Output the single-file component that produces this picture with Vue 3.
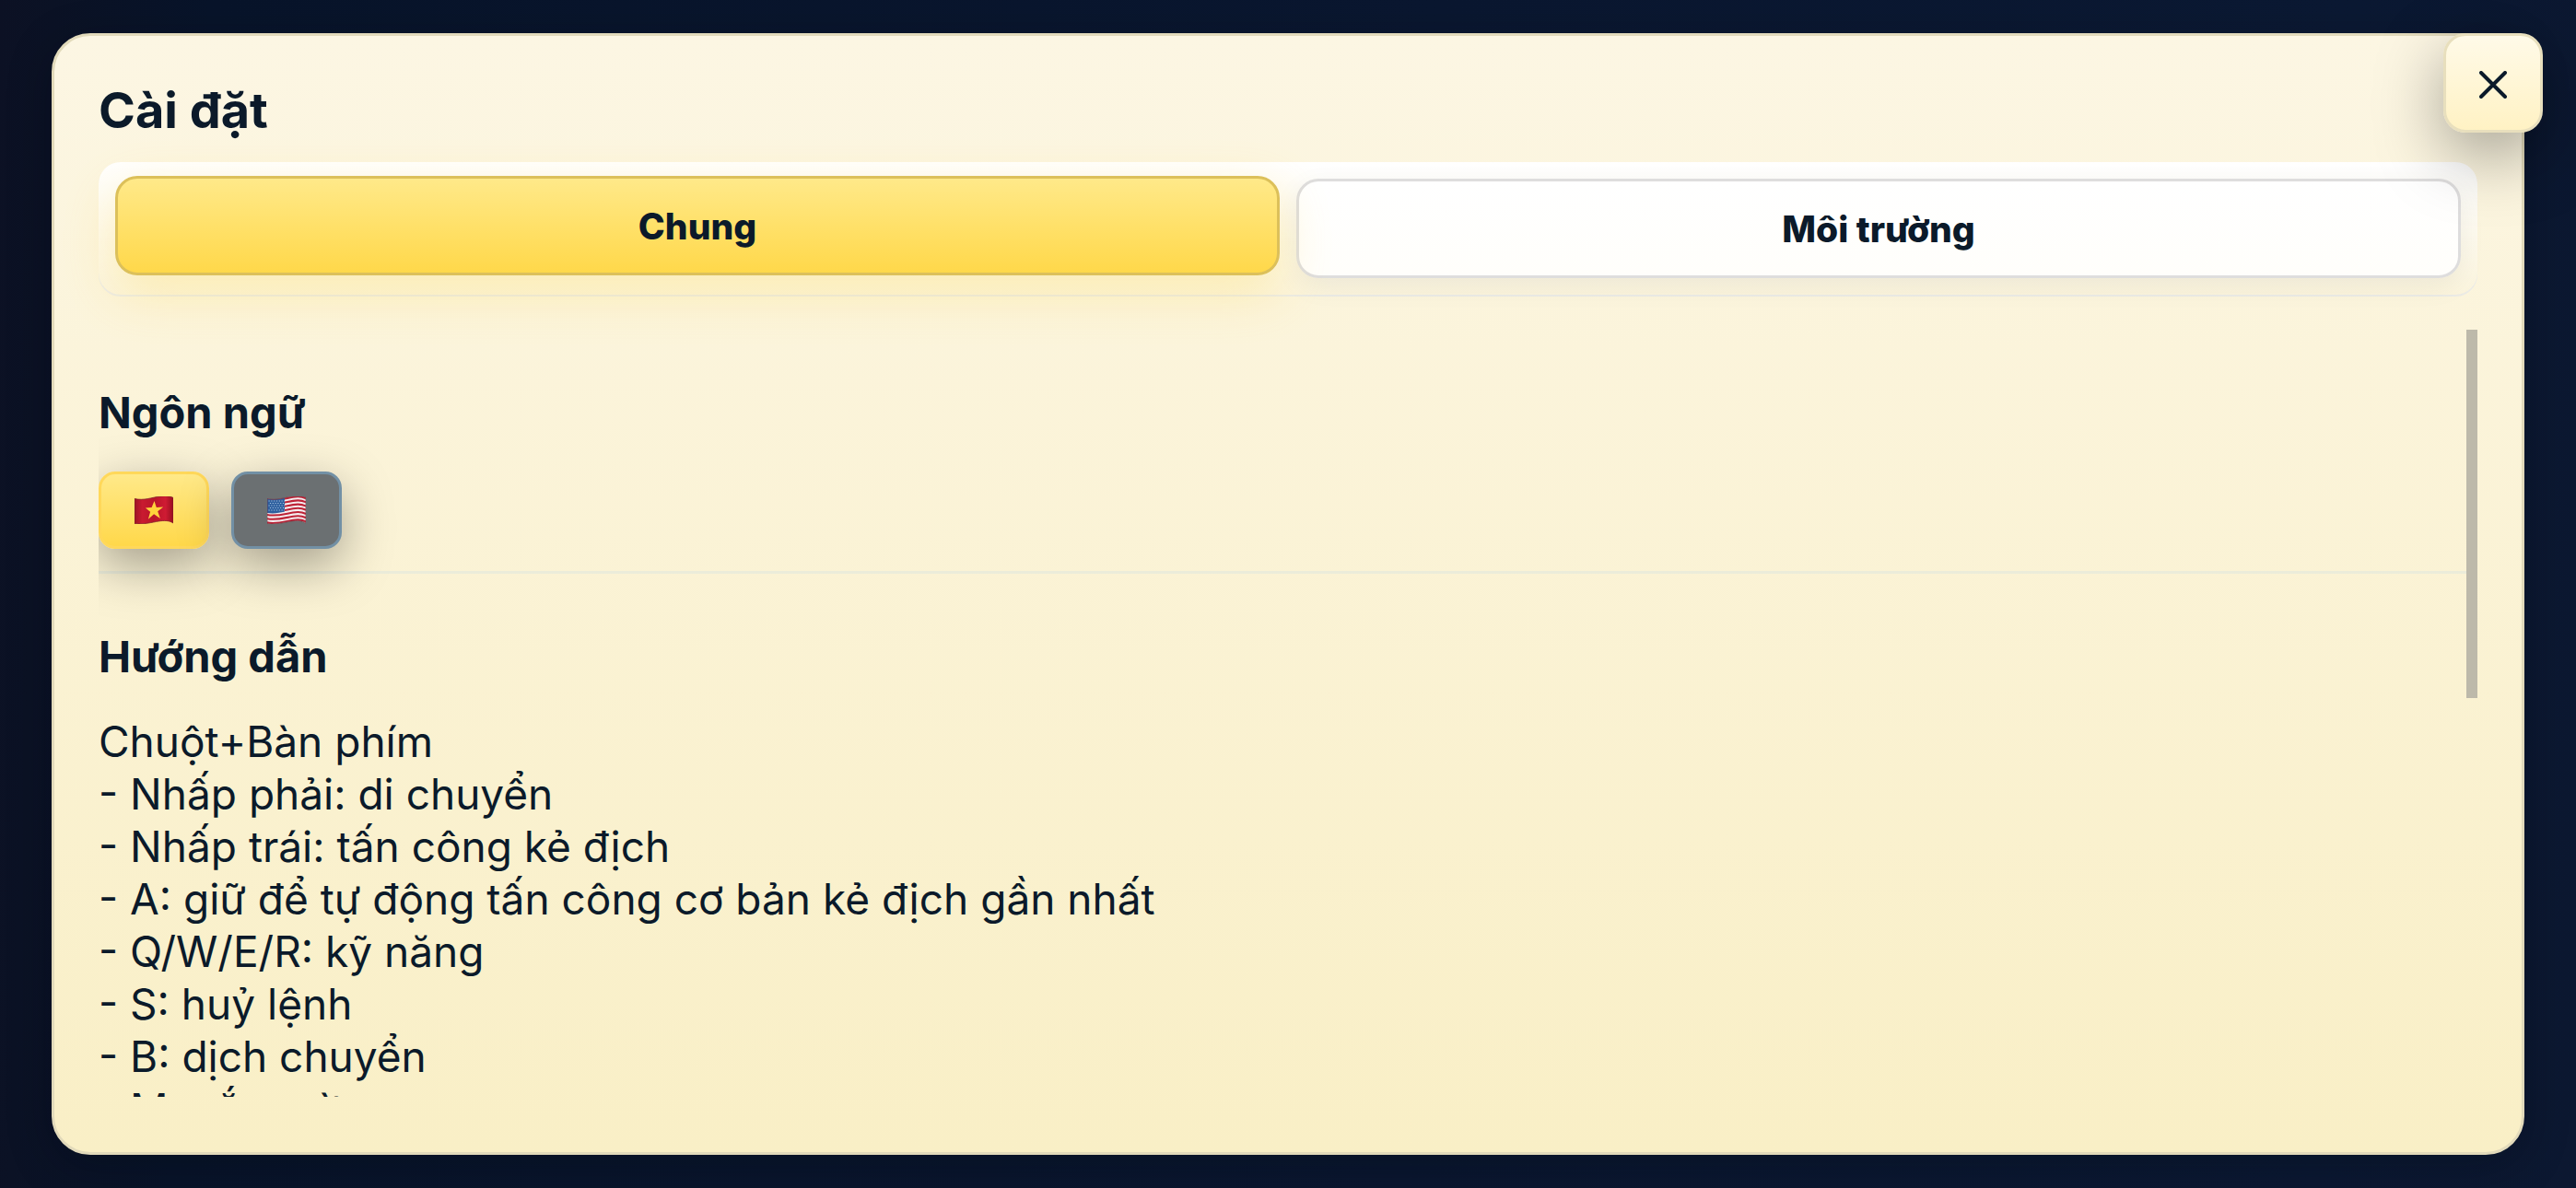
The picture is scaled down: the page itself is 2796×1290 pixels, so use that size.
<script setup>
import { ref } from 'vue'

const tab = ref('general')
const lang = ref('vi')
const tabs = [
  { id: 'general', label: 'Chung' },
  { id: 'environment', label: 'Môi trường' },
]
const guide = [
  'Chuột+Bàn phím',
  '- Nhấp phải: di chuyển',
  '- Nhấp trái: tấn công kẻ địch',
  '- A: giữ để tự động tấn công cơ bản kẻ địch gần nhất',
  '- Q/W/E/R: kỹ năng',
  '- S: huỷ lệnh',
  '- B: dịch chuyển',
  '- M: cắm cờ',
]
const cloth = 'M0 2.500C10 5 19 1 28 0S40 .5 42 1.500V29C38 26 32 26 26 27S8 31 0 29.500Z'
</script>

<template>
  <div class="screen">
    <section class="panel" aria-labelledby="settings-title">
      <button class="close" type="button" aria-label="Đóng">
        <svg viewBox="0 0 30 30" aria-hidden="true">
          <path d="M2 2 28 28M28 2 2 28" />
        </svg>
      </button>
      <h1 id="settings-title">Cài đặt</h1>
      <nav class="tabs">
        <button
          v-for="t in tabs"
          :key="t.id"
          type="button"
          class="tab"
          :class="{ active: tab === t.id }"
          @click="tab = t.id"
        >{{ t.label }}</button>
      </nav>
      <div class="content">
        <div class="scroll">
          <section class="group language">
            <h2>Ngôn ngữ</h2>
            <div class="flags">
              <button class="flag" :class="{ chosen: lang === 'vi' }" type="button" aria-label="Tiếng Việt" @click="lang = 'vi'">
                <svg viewBox="0 0 42 30" aria-hidden="true">
                  <defs>
                    <linearGradient id="vn" x1="0" x2="1">
                      <stop offset="0" stop-color="#9c1424" />
                      <stop offset=".2" stop-color="#c91a30" />
                      <stop offset=".5" stop-color="#b8152a" />
                      <stop offset=".8" stop-color="#cf1b33" />
                      <stop offset="1" stop-color="#980f20" />
                    </linearGradient>
                  </defs>
                  <path :d="cloth" fill="url(#vn)" stroke="#80202a" stroke-width=".8" />
                  <path d="m21.500 5 2.300 7 7.400-.6-6 4.800 2.700 7.800-6.800-4.800-6.200 5.500 2.200-8-5.200-4.200 6.700-.6Z" fill="#ffd33c" />
                </svg>
              </button>
              <button class="flag" :class="{ chosen: lang === 'en' }" type="button" aria-label="English" @click="lang = 'en'">
                <svg viewBox="0 0 42 30" aria-hidden="true">
                  <defs>
                    <clipPath id="us"><path :d="cloth" /></clipPath>
                  </defs>
                  <g clip-path="url(#us)">
                    <path d="M0 0H42V30H0Z" fill="#f5eef0" />
                    <g fill="none" stroke="#bd2337" stroke-width="2.100">
                      <path v-for="n in 8" :key="n" :d="`M0 ${n * 4.2 - 1}C10 ${n * 4.2 + 1} 19 ${n * 4.2 - 2} 28 ${n * 4.2 - 3.5}S40 ${n * 4.2 - 3} 42 ${n * 4.2 - 2}`" />
                    </g>
                    <path d="M0 0H19V16.500C13 18 7 19 0 18Z" fill="#2d5f9e" />
                    <path d="M1.500 5H19M2.900 7.500H19M1.500 10H19M2.900 12.500H19M1.500 15H19" stroke="#a9c3e2" stroke-width="1.200" stroke-dasharray="1.200 1.600" />
                  </g>
                  <path :d="cloth" fill="none" stroke="#77343d" stroke-width=".7" />
                </svg>
              </button>
            </div>
          </section>
          <section class="group">
            <h2>Hướng dẫn</h2>
            <p v-for="line in guide" :key="line">{{ line }}</p>
          </section>
        </div>
        <div class="thumb"></div>
      </div>
    </section>
  </div>
</template>

<style>
body {
  margin: 0;
  background: #0a1730;
}
</style>

<style scoped>
* {
  box-sizing: border-box;
}
.screen {
  height: 100vh;
  padding: 36px 56px;
  background: linear-gradient(92deg, #0c1124 0%, #0b1225 2%, #08142a 8%, #0a1730 55%, #0b1933 90%, #0c1831 100%);
  color: #0b1a2a;
  font-family: Inter, "Noto Sans", sans-serif;
  overflow: hidden;
}
.panel {
  position: relative;
  display: flex;
  flex-direction: column;
  height: 100%;
  padding: 48px 48px 60px;
  border: 3px solid #e2dabb;
  border-radius: 42px;
  background: linear-gradient(180deg, #fcf6e3 0%, #f9efc6 100%);
  box-shadow: 0 12px 48px rgba(0, 5, 15, 0.3);
}
h1,
h2,
p {
  margin: 0;
}
h1 {
  font-size: 54px;
  line-height: 66px;
  font-weight: 700;
}
h2 {
  font-size: 47px;
  line-height: 60px;
  font-weight: 700;
}
p {
  font-size: 46px;
  line-height: 57px;
}
button {
  padding: 0;
  font-family: inherit;
  color: inherit;
  cursor: pointer;
}
.close {
  position: absolute;
  z-index: 2;
  top: -3px;
  right: -23px;
  display: grid;
  place-items: center;
  width: 108px;
  height: 108px;
  padding-top: 4px;
  border: 3px solid #e8dfbd;
  border-radius: 24px;
  background: linear-gradient(180deg, #fffae8, #fff2c4);
  box-shadow: 0 24px 72px rgba(0, 0, 0, 0.35);
}
.close svg {
  width: 30px;
  height: 30px;
  fill: none;
  stroke: #0b1a2a;
  stroke-width: 4;
  stroke-linecap: round;
}
.tabs {
  display: flex;
  gap: 18px;
  margin-top: 23px;
  padding: 18px 18px 20px;
  border-radius: 24px;
  background: linear-gradient(180deg, #fff, rgba(255, 255, 255, 0));
  box-shadow: inset 0 -2px 0 rgba(220, 225, 240, 0.5);
}
.tab {
  flex: 1;
  height: 108px;
  border: 3px solid #dedddd;
  border-radius: 24px;
  background: linear-gradient(180deg, #fff, #fffefb);
  box-shadow: 0 9px 30px rgba(0, 0, 0, 0.06);
  font-size: 39px;
  font-weight: 800;
}
.tab.active {
  border-color: #dcc05a;
  background: linear-gradient(180deg, #ffe989, #ffd84a);
  box-shadow: 0 18px 54px rgba(255, 216, 74, 0.32);
  transform: translateY(-3px);
}
.content {
  position: relative;
  flex: 1;
  min-height: 0;
  margin-top: 36px;
}
.scroll {
  height: 100%;
  overflow: hidden;
}
.group {
  padding-top: 60px;
}
.group h2 {
  margin-bottom: 34px;
}
.language {
  padding-bottom: 24px;
  border-bottom: 3px solid #ebecda;
}
.flags {
  display: flex;
  gap: 24px;
}
.flag {
  display: grid;
  place-items: center;
  width: 120px;
  height: 84px;
  border: 3px solid #7290a5;
  border-radius: 18px;
  background: #6b7072;
  box-shadow: 0 18px 54px rgba(0, 0, 0, 0.35);
}
.flag.chosen {
  border-color: #ffd85a;
  background: linear-gradient(180deg, #ffe989, #ffd84a);
}
.flag svg {
  width: 42px;
  height: 30px;
}
.thumb {
  position: absolute;
  top: 0;
  right: 0;
  width: 12px;
  height: 48%;
  background: #bdb9aa;
}
</style>
